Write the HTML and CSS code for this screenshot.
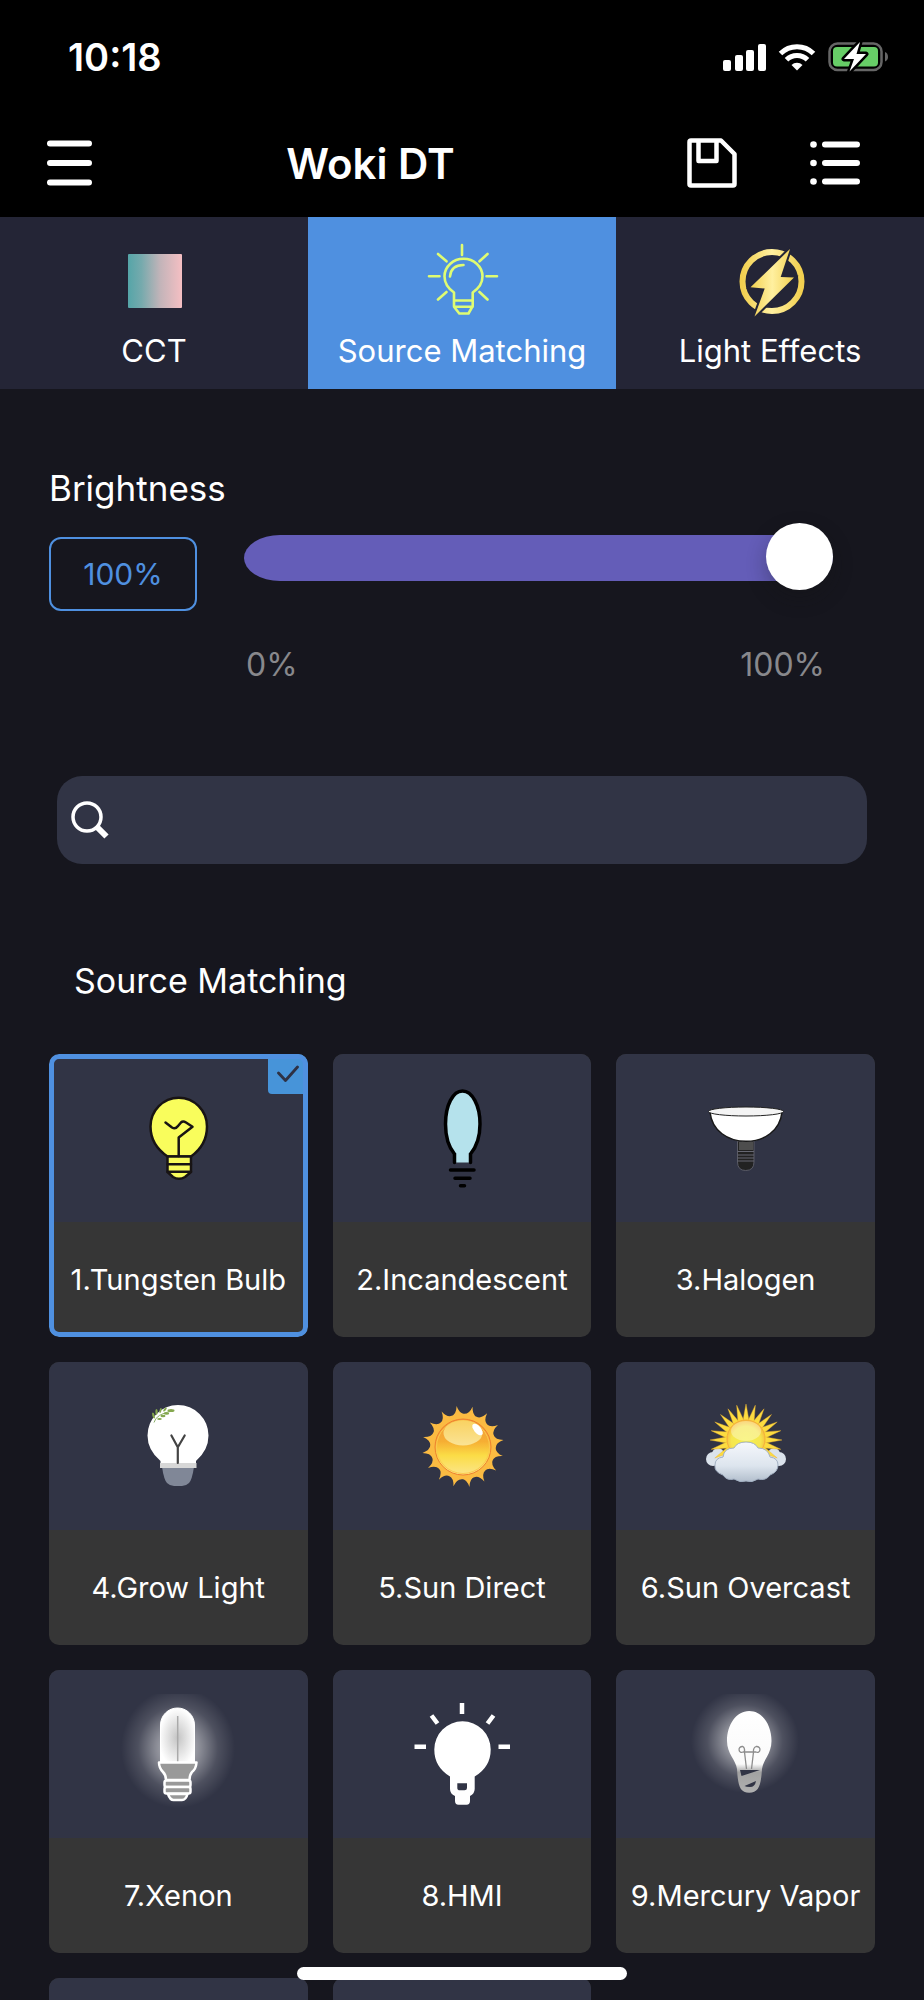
FILE: index.html
```html
<!DOCTYPE html>
<html lang="en">
<head>
<meta charset="UTF-8">
<meta name="viewport" content="width=device-width, initial-scale=1.0">
<title>Woki DT</title>
<link rel="stylesheet" href="styles.css">
</head>
<body>
  <header class="header">
    <div class="status">
      <span class="time">10:18</span>
      <svg width="43" height="28" viewBox="0 0 43 28" fill="#fff">
        <rect x="0" y="17" width="8" height="11" rx="2"/>
        <rect x="12" y="12" width="8" height="16" rx="2"/>
        <rect x="23" y="7" width="8" height="21" rx="2"/>
        <rect x="35" y="1" width="8" height="27" rx="2"/>
      </svg>
      <svg width="38" height="28" viewBox="0 0 38 28">
        <g fill="none" stroke="#fff" stroke-width="5">
          <path d="M2.500 10.500A23.500 23.500 0 0 1 35.500 10.500"/>
          <path d="M8.500 16.800A14.800 14.800 0 0 1 29.500 16.800"/>
        </g>
        <path d="M13.500 22A7.800 7.800 0 0 1 24.500 22L19 27.500Z" fill="#fff"/>
      </svg>
      <svg width="61" height="30" viewBox="0 0 61 30">
        <rect x="1.500" y="1.500" width="52" height="26.500" rx="8" fill="none" stroke="#666" stroke-width="2.500"/>
        <path d="M57 10Q60 11 60 15Q60 18 57 19.500Z" fill="#666"/>
        <rect x="5" y="5" width="45" height="19.500" rx="4" fill="#67ce67"/>
        <path d="M32 0L16 17H26L21.500 29.500L38 12H28.500Z" fill="#fff" stroke="#000" stroke-width="5" stroke-linejoin="round" paint-order="stroke"/>
      </svg>
    </div>
    <div class="navbar">
      <button class="icon-btn" aria-label="Menu">
        <svg width="46" height="46" viewBox="0 0 46 46" stroke="#fff" stroke-width="6" stroke-linecap="round">
          <path d="M4 3.500H43M4 23H43M4 42.500H43"/>
        </svg>
      </button>
      <h1 class="title">Woki DT</h1>
      <button class="icon-btn" aria-label="Save">
        <svg width="50" height="50" viewBox="0 0 50 50" fill="none" stroke="#fff" stroke-width="4.500" stroke-linejoin="round">
          <path d="M4 2.500H34L47.500 16V46Q47.500 47.500 46 47.500H4Q2.500 47.500 2.500 46V4Q2.500 2.500 4 2.500Z"/>
          <path d="M11.500 3V23H29.500V3"/>
        </svg>
      </button>
      <button class="icon-btn" aria-label="Presets">
        <svg width="50" height="50" viewBox="0 0 50 50" fill="#fff">
          <circle cx="3.500" cy="6.500" r="3.300"/><circle cx="3.500" cy="25" r="3.300"/><circle cx="3.500" cy="43.500" r="3.300"/>
          <path d="M15 6.500H47M15 25H47M15 43.500H47" stroke="#fff" stroke-width="6" stroke-linecap="round"/>
        </svg>
      </button>
    </div>
  </header>

  <nav class="tabs">
    <button class="tab">
      <svg width="72" height="72" viewBox="0 0 72 72">
        <defs>
          <linearGradient id="cct">
            <stop offset="0" stop-color="#55a5a8"/>
            <stop offset=".25" stop-color="#76aaad"/>
            <stop offset=".6" stop-color="#c3b4b9"/>
            <stop offset="1" stop-color="#f5bfc3"/>
          </linearGradient>
        </defs>
        <rect x="10" y="11" width="54" height="54" rx="1" fill="url(#cct)"/>
      </svg>
      <span>CCT</span>
    </button>
    <button class="tab active">
      <svg width="72" height="72" viewBox="0 0 72 72" fill="none" stroke="#dffc72" stroke-width="2.600" stroke-linecap="round" stroke-linejoin="round">
        <path d="M36 2V12M12 11L20.500 18.300M3 33.300H13.500M20.500 49L12 56.500M61.500 11L53.500 18.300M60.500 33.300H71M53.500 49L61.500 56.500"/>
        <path d="M28 63V49.500Q18.500 43 18.500 33.300A19 17.500 0 0 1 56.500 33.300Q56.500 43 46.700 49.500V63L42.500 70.500H33.300L28 63.700H46.700M28 57.500H46.700"/>
        <path d="M24 33.500Q25 22 37.500 22"/>
      </svg>
      <span>Source Matching</span>
    </button>
    <button class="tab">
      <svg width="72" height="72" viewBox="0 0 72 72">
        <defs>
          <linearGradient id="gold">
            <stop offset="0" stop-color="#f2d050"/>
            <stop offset=".5" stop-color="#fff0a0"/>
            <stop offset="1" stop-color="#f2d050"/>
          </linearGradient>
        </defs>
        <circle cx="38" cy="38.500" r="29.500" fill="none" stroke="url(#gold)" stroke-width="6"/>
        <path d="M56 6L46.700 34L60 34.500L20.500 73.500L30.700 45.500L16.500 44.300Z" fill="url(#gold)" stroke="#242536" stroke-width="4" paint-order="stroke"/>
      </svg>
      <span>Light Effects</span>
    </button>
  </nav>

  <main class="main">
    <section class="brightness">
      <label class="brightness-label" for="brightness">Brightness</label>
      <div class="brightness-row">
        <input class="value" type="text" value="100%" aria-label="Brightness value">
        <div class="slider-box">
          <input class="slider" type="range" id="brightness" min="0" max="100" value="100">
          <div class="scale"><span>0%</span><span>100%</span></div>
        </div>
      </div>
    </section>

    <div class="search">
      <svg width="38" height="38" viewBox="0 0 38 38" fill="none" stroke="#fff">
        <circle cx="16" cy="16" r="14" stroke-width="3.500"/>
        <path d="M26 26L35.500 35.500" stroke-width="6"/>
      </svg>
      <input class="search-input" type="search" aria-label="Search sources">
    </div>

    <h2 class="section-title">Source Matching</h2>

    <div class="grid">
      <button class="card selected" aria-pressed="true">
        <span class="badge">
          <svg width="22" height="18" viewBox="0 0 22 18" fill="none" stroke="#2e3144" stroke-width="2.800" stroke-linecap="round" stroke-linejoin="round"><path d="M1.500 8L8.500 15.500L20.500 2"/></svg>
        </span>
        <span class="pic">
          <!-- tungsten -->
          <svg width="120" height="120" viewBox="0 0 120 120" fill="#f9fd5c" stroke="#181414" stroke-width="2.500" stroke-linejoin="round" stroke-linecap="round">
            <path d="M49.500 78.500C40 72 32.500 62 32.500 48.500A28 28.500 0 0 1 89 48.500C89 62 82 72 73 78.500Z"/>
            <path d="M49.500 78.500H73V94L67 99Q61 102.500 55 99L49.500 94Z"/>
            <path d="M49.500 86.300H73M49.500 93.700H73" fill="none"/>
            <path d="M47.500 44.500L54 49.500Q57.500 51.500 60 48L63 44.500Q65 42.500 68 44.500L74.500 48.700L60.700 59.500V78" fill="none"/>
          </svg>
        </span>
        <span class="name">1.Tungsten Bulb</span>
      </button>
      <button class="card">
        <span class="pic">
          <!-- incandescent -->
          <svg width="120" height="120" viewBox="0 0 120 120" stroke="#000" stroke-width="3.500" stroke-linecap="round">
            <path d="M52.500 84.500V76C45 67 43.500 56 43.500 46C43.500 27 51 13 60.500 13S78 27 78 46C78 56 76 67 68.500 76V84.500" fill="#b5e2ec"/>
            <path d="M48.500 92H72M53 100.300H68M58.500 107.700H62.500"/>
          </svg>
        </span>
        <span class="name">2.Incandescent</span>
      </button>
      <button class="card">
        <span class="pic">
          <!-- halogen -->
          <svg width="120" height="120" viewBox="0 0 120 120">
            <path d="M51.500 63H68V84Q68 92.500 59.700 92.500Q51.500 92.500 51.500 84Z" fill="#222" stroke="#5a5b66" stroke-width="1"/>
            <rect x="53" y="64" width="14" height="8" fill="#4d4d4d"/>
            <path d="M51.500 73.500H68M51.500 77H68M51.500 80H68M51.500 83H68" stroke="#666772" stroke-width="1"/>
            <path d="M24 34C26 53 42 63.300 60 63.300S94 53 96 34Z" fill="#fff" stroke="#181818" stroke-width="1.500"/>
            <ellipse cx="60" cy="33.500" rx="37.500" ry="4.500" fill="#f4f4f4" stroke="#222" stroke-width="1"/>
          </svg>
        </span>
        <span class="name">3.Halogen</span>
      </button>

      <button class="card">
        <span class="pic">
          <!-- grow light -->
          <svg width="120" height="120" viewBox="0 0 120 120">
            <path d="M44 81H76Q74 94 71 97Q68 100 64 100H56Q52 100 49 97Q46 94 44 81Z" fill="#808797"/>
            <path d="M42.500 78V75Q29.500 64 29.500 49.500A30.500 30.500 0 0 1 90.500 49.500Q90.500 64 78 75V78Z" fill="#fff"/>
            <rect x="42" y="77" width="36.500" height="5" fill="#d7d7d7"/>
            <path d="M53.400 49.500L59.800 61.300L66.700 49.500M59.800 61.300V77" fill="none" stroke="#444" stroke-width="2.200" stroke-linecap="round"/>
            <path d="M36 36.500Q38 28 54 25" fill="none" stroke="#8db06a" stroke-width="1"/>
            <g fill="#85a84f">
              <ellipse cx="53" cy="24.500" rx="3.500" ry="1.500"/>
              <ellipse cx="48.500" cy="27.500" rx="2.700" ry="1.200"/>
              <ellipse cx="45" cy="30" rx="2.500" ry="1.200"/>
              <ellipse cx="41.500" cy="33" rx="2.300" ry="1.100"/>
              <ellipse cx="47" cy="23.500" rx="2.500" ry="1" transform="rotate(-50 47 23.500)"/>
              <ellipse cx="42.500" cy="24.500" rx="2.500" ry="1" transform="rotate(-75 42.500 24.500)"/>
              <ellipse cx="38.500" cy="26" rx="3" ry="1.200" transform="rotate(-90 38.500 26)"/>
              <ellipse cx="35.500" cy="29.500" rx="3" ry="1.200" transform="rotate(75 35.500 29.500)"/>
            </g>
          </svg>
        </span>
        <span class="name">4.Grow Light</span>
      </button>
      <button class="card">
        <span class="pic">
          <!-- direct sun -->
          <svg width="120" height="120" viewBox="0 0 120 120">
            <defs>
              <linearGradient id="sunBall" x1="0" y1="0" x2="0" y2="1">
                <stop offset="0" stop-color="#f3993a"/>
                <stop offset=".4" stop-color="#f6ae33"/>
                <stop offset=".65" stop-color="#fbdc46"/>
                <stop offset="1" stop-color="#fbe68a"/>
              </linearGradient>
              <linearGradient id="sunGloss" x1="0" y1="0" x2="0" y2="1">
                <stop offset="0" stop-color="#f9d262"/>
                <stop offset="1" stop-color="#fae394"/>
              </linearGradient>
              <path id="flare" d="M-8 -29L-6.500 -32Q-1.500 -33 0 -41Q1.500 -33 6.500 -32L8 -29Z"/>
            </defs>
            <g transform="translate(61 60.500) rotate(-9)" fill="#fbbb42">
              <circle r="31"/>
              <use href="#flare"/>
              <use href="#flare" transform="rotate(22.500)"/>
              <use href="#flare" transform="rotate(45)"/>
              <use href="#flare" transform="rotate(67.500)"/>
              <use href="#flare" transform="rotate(90)"/>
              <use href="#flare" transform="rotate(112.500)"/>
              <use href="#flare" transform="rotate(135)"/>
              <use href="#flare" transform="rotate(157.500)"/>
              <use href="#flare" transform="rotate(180)"/>
              <use href="#flare" transform="rotate(202.500)"/>
              <use href="#flare" transform="rotate(225)"/>
              <use href="#flare" transform="rotate(247.500)"/>
              <use href="#flare" transform="rotate(270)"/>
              <use href="#flare" transform="rotate(292.500)"/>
              <use href="#flare" transform="rotate(315)"/>
              <use href="#flare" transform="rotate(337.500)"/>
            </g>
            <circle cx="61" cy="61" r="28" fill="url(#sunBall)" stroke="#ee8130" stroke-width="1"/>
            <circle cx="61" cy="61" r="26.500" fill="none" stroke="#fbc94f" stroke-width="1"/>
            <ellipse cx="61" cy="47" rx="19.500" ry="12.500" fill="url(#sunGloss)"/>
            <ellipse cx="75.500" cy="43.500" rx="7" ry="3.500" fill="#fff" transform="rotate(50 75.500 43.500)"/>
          </svg>
        </span>
        <span class="name">5.Sun Direct</span>
      </button>
      <button class="card">
        <span class="pic">
          <!-- overcast sun -->
          <svg width="120" height="120" viewBox="0 0 120 120">
            <defs>
              <radialGradient id="ball2" cx=".5" cy=".55" r=".55">
                <stop offset="0" stop-color="#f6f04c"/>
                <stop offset=".7" stop-color="#f5e650"/>
                <stop offset="1" stop-color="#f7b83a"/>
              </radialGradient>
              <linearGradient id="cloud" x1="0" y1="0" x2="0" y2="1">
                <stop offset="0" stop-color="#f5f7fb"/>
                <stop offset=".6" stop-color="#dde5ee"/>
                <stop offset="1" stop-color="#b3bfcd"/>
              </linearGradient>
              <path id="ray" d="M-3.500 -17L0 -36L3.500 -17Z"/>
            </defs>
            <g fill="#dbe3ec">
              <circle cx="27" cy="73" r="7"/><circle cx="32" cy="68" r="6"/>
              <circle cx="93" cy="73" r="7"/><circle cx="88" cy="68" r="6"/>
            </g>
            <g transform="translate(60 54)" fill="#fcdc40" stroke="#f0b430" stroke-width=".4">
              <use href="#ray"/>
              <use href="#ray" transform="rotate(15)"/><use href="#ray" transform="rotate(-15)"/>
              <use href="#ray" transform="rotate(30)"/><use href="#ray" transform="rotate(-30)"/>
              <use href="#ray" transform="rotate(45)"/><use href="#ray" transform="rotate(-45)"/>
              <use href="#ray" transform="rotate(60)"/><use href="#ray" transform="rotate(-60)"/>
              <use href="#ray" transform="rotate(75)"/><use href="#ray" transform="rotate(-75)"/>
              <use href="#ray" transform="rotate(90)"/><use href="#ray" transform="rotate(-90)"/>
              <use href="#ray" transform="rotate(105)"/><use href="#ray" transform="rotate(-105)"/>
              <use href="#ray" transform="rotate(120)"/><use href="#ray" transform="rotate(-120)"/>
            </g>
            <circle cx="60" cy="53" r="19" fill="url(#ball2)" stroke="#f3ae3d" stroke-width="1"/>
            <ellipse cx="60" cy="45" rx="15" ry="10" fill="#fff" opacity=".35"/>
            <path d="M37 89Q28 86 29 79Q29 72 37 71Q38 62 48 62Q51 56 60 56Q69 56 72 62Q82 62 84 71Q92 72 92 79Q92 86 84 89Q80 95 72 93Q66 97 60 95Q54 97 48 93Q41 95 37 89Z" fill="url(#cloud)" stroke="#a3b1c3" stroke-width="1"/>
          </svg>
        </span>
        <span class="name">6.Sun Overcast</span>
      </button>

      <button class="card">
        <span class="pic">
          <!-- xenon -->
          <svg width="120" height="120" viewBox="0 0 120 120">
            <defs>
              <radialGradient id="glow">
                <stop offset="0" stop-color="#fff" stop-opacity=".75"/>
                <stop offset=".4" stop-color="#fff" stop-opacity=".42"/>
                <stop offset=".7" stop-color="#fff" stop-opacity=".14"/>
                <stop offset="1" stop-color="#fff" stop-opacity="0"/>
              </radialGradient>
              <radialGradient id="tube" cx=".5" cy=".55" r=".55">
                <stop offset="0" stop-color="#c4c4c4"/>
                <stop offset="1" stop-color="#fff"/>
              </radialGradient>
            </defs>
            <ellipse cx="60" cy="54" rx="57" ry="60" fill="url(#glow)"/>
            <path d="M42.500 68V31A17 17 0 0 1 76.500 31V68Z" fill="url(#tube)" stroke="#fff" stroke-width="1"/>
            <path d="M59.700 22V68" stroke="#aaa" stroke-width="1.500"/>
            <g fill="#999" stroke="#fff" stroke-width="2.500" stroke-linejoin="round">
              <path d="M41 68.500H78.500Q78 75 74 78Q71.500 81 71.500 86H48Q48 81 45 78Q41 74 41 68.500Z"/>
              <rect x="46.500" y="86.500" width="26" height="6.500" rx="2"/>
              <rect x="46.500" y="93" width="26" height="6.500" rx="2"/>
              <path d="M50 100H69.500Q68 106 64 106H55.500Q52 106 50 100Z"/>
            </g>
          </svg>
        </span>
        <span class="name">7.Xenon</span>
      </button>
      <button class="card">
        <span class="pic">
          <!-- hmi -->
          <svg width="120" height="120" viewBox="0 0 120 120" fill="#fff">
            <path d="M60 9V20M29.500 21.500L35.500 29.500M91.500 21.500L85.500 29.500M12.500 52.700H24M96.500 52.700H108" stroke="#fff" stroke-width="4.500"/>
            <path d="M48 82.500Q32.300 73 32.300 55.500A28.200 28.200 0 0 1 88.700 55.500Q88.700 73 72.700 82.500V95Q72.500 100 68 102V107Q68 110.700 64.500 110.700H56.500Q53 110.700 53 107V102Q48 100 48 95Z"/>
            <path d="M55.300 89.300H65V94Q65 96.300 62.500 96.300H58Q55.300 96.300 55.300 94Z" fill="#313445"/>
          </svg>
        </span>
        <span class="name">8.HMI</span>
      </button>
      <button class="card">
        <span class="pic">
          <!-- mercury vapor -->
          <svg width="120" height="120" viewBox="0 0 120 120">
            <defs>
              <linearGradient id="glass" x1="0" y1="0" x2="0" y2="1">
                <stop offset="0" stop-color="#fff"/>
                <stop offset=".65" stop-color="#fafafa"/>
                <stop offset=".75" stop-color="#a2a2a2"/>
                <stop offset="1" stop-color="#b0b0b0"/>
              </linearGradient>
            </defs>
            <ellipse cx="59" cy="47" rx="54" ry="52" fill="url(#glow)"/>
            <path d="M63.200 17C50 17 41 31 41 47C41 60 50 66 51 75C52 90 53 98.700 63.200 98.700S75 90 76 75C77 66 85.500 60 85.500 47C85.500 31 76.500 17 63.200 17Z" fill="url(#glass)"/>
            <path d="M54 76H74L55.500 82ZM58.500 92L70 87Q69 93 64 93Q60 93 58.500 92Z" fill="#313445"/>
            <path d="M60.500 75L58.500 58M65.500 75L67.500 58M57 52.500C51 52 52.500 60 57 58H70C74.500 60 76 52 70 52.500M57 52.500Q59 54 58.500 58M70 52.500Q67 54 67.500 58" fill="none" stroke="#8c8c8c" stroke-width="1.300"/>
          </svg>
        </span>
        <span class="name">9.Mercury Vapor</span>
      </button>

      <div class="card"><span class="pic"></span></div>
      <div class="card"><span class="pic"></span></div>
    </div>
  </main>

  <div class="home-indicator"></div>
</body>
</html>
```
FILE: styles.css
```css
* {
  box-sizing: border-box;
}

body {
  margin: 0;
  height: 100vh;
  overflow: hidden;
  display: flex;
  flex-direction: column;
  background-color: #16161e;
  color: #fff;
  font-family: Inter, "Liberation Sans", sans-serif;
}

button,
input {
  font-family: inherit;
  color: inherit;
}

button {
  border: none;
  padding: 0;
  cursor: pointer;
}

svg {
  display: block;
  flex-shrink: 0;
}

.header {
  background-color: #000;
  flex-shrink: 0;
}

.status {
  display: flex;
  align-items: center;
  gap: 12px;
  height: 113px;
  padding: 0 35px 0 68px;
}

.time {
  margin-right: auto;
  font-size: 38px;
  font-weight: 600;
}

.navbar {
  display: flex;
  align-items: center;
  height: 104px;
  padding: 0 64px 4px 46px;
}

.title {
  flex: 1;
  margin: 0 38px 0 0;
  font-size: 42px;
  font-weight: 600;
  text-align: center;
}

.icon-btn {
  background: none;
}

.icon-btn + .icon-btn {
  margin-left: 73px;
}

.tabs {
  display: grid;
  grid-template-columns: repeat(3, 1fr);
  flex-shrink: 0;
}

.tab {
  display: flex;
  flex-direction: column;
  align-items: center;
  gap: 18px;
  height: 172px;
  padding-top: 26px;
  background-color: #242536;
  font-size: 31px;
  line-height: 36px;
}

.tab svg {
  overflow: visible;
}

.tab.active {
  background-color: #4f90e0;
}

.main {
  flex: 1;
  min-height: 0;
  overflow: hidden;
  padding: 77px 49px 0;
}

.brightness {
  padding-right: 42px;
}

.brightness-label {
  display: block;
  font-size: 35px;
  line-height: 44px;
}

.brightness-row {
  display: flex;
  align-items: flex-start;
  gap: 47px;
  margin-top: 25px;
}

.value {
  width: 148px;
  height: 74px;
  margin-top: 2px;
  padding: 0;
  border: 2px solid #4f90e0;
  border-radius: 12px;
  background: none;
  color: #4f90e0;
  font-size: 30px;
  text-align: center;
}

.slider-box {
  flex: 1;
}

.slider {
  -webkit-appearance: none;
  appearance: none;
  display: block;
  width: 100%;
  height: 46px;
  margin: 0;
  background: none;
}

.slider::-webkit-slider-runnable-track {
  height: 46px;
  border-radius: 36px / 23px;
  background-color: #645db8;
}

.slider::-webkit-slider-thumb {
  -webkit-appearance: none;
  width: 67px;
  height: 67px;
  margin-top: -12px;
  border-radius: 50%;
  background-color: #fff;
  box-shadow: 0 8px 20px rgba(20, 20, 20, 0.3);
}

.scale {
  display: flex;
  justify-content: space-between;
  margin-top: 64px;
  padding: 0 8px 0 2px;
  color: #88888c;
  font-size: 32px;
  line-height: 40px;
}

.search {
  display: flex;
  align-items: center;
  gap: 16px;
  height: 88px;
  margin: 91px 8px 0;
  padding: 0 14px;
  border-radius: 25px;
  background-color: #313445;
}

.search-input {
  flex: 1;
  height: 60px;
  border: none;
  outline: none;
  background: none;
  font-size: 30px;
}

.section-title {
  margin: 96px 25px 52px;
  font-size: 34px;
  font-weight: 400;
  line-height: 42px;
}

.grid {
  display: grid;
  grid-template-columns: repeat(3, 1fr);
  gap: 25px;
}

.card {
  position: relative;
  display: flex;
  flex-direction: column;
  height: 283px;
  overflow: hidden;
  border-radius: 10px;
  background-color: #363636;
  font-size: 29px;
}

.card.selected::after {
  content: "";
  position: absolute;
  inset: 0;
  border: 5px solid #4f90e0;
  border-radius: 10px;
}

.pic {
  display: flex;
  align-items: center;
  justify-content: center;
  width: 100%;
  height: 170px;
  background-color: #313445;
}

.name {
  width: 100%;
  line-height: 115px;
  text-align: center;
  white-space: nowrap;
}

.badge {
  position: absolute;
  top: 0;
  right: 0;
  display: flex;
  align-items: center;
  justify-content: center;
  width: 40px;
  height: 40px;
  border-radius: 0 0 0 4px;
  background-color: #4794d9;
}

.home-indicator {
  position: fixed;
  bottom: 20px;
  left: 50%;
  width: 330px;
  height: 13px;
  margin-left: -165px;
  border-radius: 7px;
  background-color: #fff;
}
```
